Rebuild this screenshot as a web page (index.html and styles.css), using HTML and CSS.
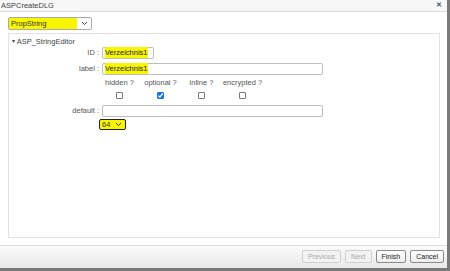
FILE: index.html
```html
<!DOCTYPE html>
<html lang="en">
<head>
    <meta charset="UTF-8">
    <title>ASPCreateDLG</title>
    <link rel="stylesheet" href="styles.css">
</head>
<body>
    <div class="dialog">
        <div class="titlebar">
            <span class="title">ASPCreateDLG</span>
            <span class="close">&#x2715;</span>
        </div>
        <div class="content">
            <div class="type-select">
                <span>PropString</span>
                <svg class="chev" width="7" height="5" viewBox="0 0 7 5"><path d="M1 1l2.5 2.5L6 1" fill="none" stroke="#333" stroke-width="1"/></svg>
            </div>
            <div class="panel">
                <div class="panel-head"><span class="tri">&#9662;</span> ASP_StringEditor</div>
                <div class="row row-id">
                    <label class="lbl">ID :</label>
                    <div class="field short"><span class="mark">Verzeichnis1</span></div>
                </div>
                <div class="row row-label">
                    <label class="lbl">label :</label>
                    <div class="field long"><span class="mark">Verzeichnis1</span></div>
                </div>
                <div class="flags">
                    <span class="flag-name">hidden ?</span>
                    <span class="flag-name">optional ?</span>
                    <span class="flag-name">inline ?</span>
                    <span class="flag-name">encrypted ?</span>
                    <span class="box"></span>
                    <span class="box checked">
                        <svg width="7" height="7" viewBox="0 0 7 7"><path d="M1.3 3.6l1.5 1.5 3-3.6" fill="none" stroke="#fff" stroke-width="1.3"/></svg>
                    </span>
                    <span class="box"></span>
                    <span class="box"></span>
                </div>
                <div class="row row-default">
                    <label class="lbl">default :</label>
                    <div class="field long"></div>
                </div>
                <div class="row row-size">
                    <div class="size-select">
                        <span>64</span>
                        <svg width="7" height="5" viewBox="0 0 7 5"><path d="M1 1l2.5 2.5L6 1" fill="none" stroke="#333" stroke-width="1"/></svg>
                    </div>
                </div>
            </div>
        </div>
        <div class="footer">
            <button class="btn" disabled>Previous</button>
            <button class="btn" disabled>Next</button>
            <button class="btn">Finish</button>
            <button class="btn">Cancel</button>
        </div>
    </div>
</body>
</html>
```

FILE: styles.css
```css
body {
    margin: 0;
    font-family: 'Liberation Sans', Arial, sans-serif;
    font-size: 7.5px;
    color: #333;
    background: #fff;
}
.dialog {
    width: 447px;
    height: 268px;
    border-right: 3px solid #7a7a7a;
    border-bottom: 3px solid #7a7a7a;
    display: flex;
    flex-direction: column;
    background: #fff;
}
.titlebar {
    height: 11px;
    display: flex;
    align-items: center;
    justify-content: space-between;
    padding: 0 5px 0 1px;
    background: #f7f7f7;
    border-bottom: 1px solid #dcdcdc;
}
.title {
    font-size: 7.5px;
    color: #444;
}
.close {
    font-size: 7px;
    color: #3d5a80;
    font-weight: bold;
}
.content {
    flex: 1;
    padding: 5px 7px 0 8px;
    display: flex;
    flex-direction: column;
}
.mark {
    background: #f8f500;
}
.type-select {
    width: 84px;
    height: 13px;
    border: 1px solid #a9a9a9;
    border-radius: 2px;
    display: flex;
    align-items: center;
    justify-content: space-between;
    padding: 0 3px 0 2px;
    box-sizing: border-box;
    background: linear-gradient(to right, #f8f500 83%, #fff 83%);
}
.panel {
    margin-top: 3px;
    height: 205px;
    border: 1px solid #e2e2e2;
    box-sizing: border-box;
    padding: 2px 0 0 3px;
}
.panel-head {
    height: 10px;
    line-height: 10px;
    color: #444;
}
.tri {
    font-size: 6px;
    vertical-align: 1px;
}
.row {
    display: flex;
    align-items: center;
}
.lbl {
    width: 87px;
    text-align: right;
    padding-right: 3px;
    color: #555;
}
.field {
    height: 12px;
    border: 1px solid #bdbdbd;
    border-radius: 2px;
    box-sizing: border-box;
    display: flex;
    align-items: center;
    padding-left: 2px;
    color: #222;
}
.field .mark {
    padding: 1px 0;
}
.short {
    width: 52px;
}
.long {
    width: 221px;
}
.row-id {
    margin-top: 1px;
}
.row-label {
    margin-top: 4px;
}
.flags {
    margin: 3px 0 0 87px;
    display: grid;
    grid-template-columns: repeat(4, 41px);
    justify-items: center;
    row-gap: 4px;
    color: #555;
    line-height: 10px;
}
.flag-name {
    white-space: nowrap;
}
.box {
    width: 7px;
    height: 7px;
    border: 1px solid #777;
    border-radius: 1px;
    box-sizing: border-box;
    display: flex;
}
.box.checked {
    background: #1a73e8;
    border-color: #1a73e8;
}
.box svg {
    margin: -1px;
}
.row-default {
    margin-top: 6px;
}
.row-size {
    margin: 2px 0 0 87px;
}
.size-select {
    width: 27px;
    height: 11px;
    box-sizing: border-box;
    border: 1px solid #222;
    border-radius: 2px;
    background: #f8f500;
    display: flex;
    align-items: center;
    justify-content: space-between;
    padding: 0 3px 0 2px;
}
.footer {
    height: 23px;
    border-top: 1px solid #dedede;
    margin-top: 7px;
    background: linear-gradient(to bottom, #fafafa, #e9e9e9);
    display: flex;
    align-items: center;
    justify-content: flex-end;
    gap: 4px;
    padding-right: 3px;
}
.btn {
    font-family: 'Liberation Sans', Arial, sans-serif;
    font-size: 7px;
    height: 13px;
    padding: 0 5px;
    border: 1px solid #8a8a8a;
    border-radius: 2px;
    background: linear-gradient(to bottom, #ffffff, #ececec);
    color: #222;
}
.btn:disabled {
    border-color: #cfcfcf;
    color: #aaa;
    background: #f2f2f2;
}
```
